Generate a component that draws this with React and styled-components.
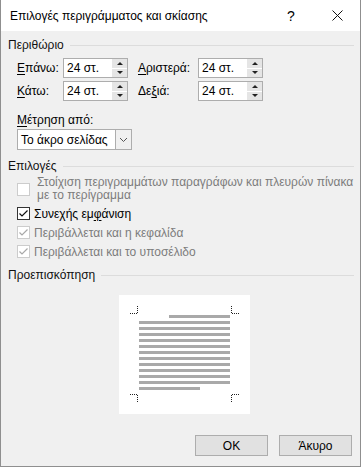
import React from "react";
import styled, { createGlobalStyle } from "styled-components";

const GlobalStyle = createGlobalStyle`
  html, body {
    margin: 0;
    padding: 0;
    background: #f0f0f0;
  }
  body {
    font-family: "Liberation Sans", "DejaVu Sans", sans-serif;
    font-size: 12px;
    color: #000;
  }
`;

const Window = styled.div`
  width: 361px;
  height: 467px;
  box-sizing: border-box;
  border: 1px solid #8f8f8f;
  border-top: none;
  display: flex;
  flex-direction: column;
  background: #f0f0f0;
`;

const TitleBar = styled.div`
  height: 31px;
  flex: none;
  background: #fff;
  display: flex;
  align-items: center;
  padding-left: 9px;
`;

const Title = styled.div`
  flex: 1;
  font-size: 12px;
`;

const TitleButton = styled.div`
  width: 46px;
  height: 31px;
  display: flex;
  align-items: center;
  justify-content: center;
  font-size: 14px;
`;

const Body = styled.div`
  flex: 1;
  display: flex;
  flex-direction: column;
  padding: 6px 6px 0 7px;
`;

const GroupHeader = styled.div`
  display: flex;
  align-items: center;
  gap: 6px;
  height: 16px;
  flex: none;
  margin-top: ${({ $top }) => $top || 0}px;
  color: #111;
  &::after {
    content: "";
    flex: 1;
    height: 1px;
    background: #dcdcdc;
  }
`;

const MarginGrid = styled.div`
  display: grid;
  grid-template-columns: 46px 65px 70px 65px;
  grid-auto-rows: 20px;
  row-gap: 3px;
  align-items: center;
  margin: 5px 0 0 9px;
`;

const Label = styled.span`
  padding-left: ${({ $pad }) => $pad || 0}px;
  white-space: nowrap;
  line-height: 14px;
  u {
    text-decoration: underline;
    text-underline-offset: 2px;
  }
`;

const SpinBox = styled.div`
  box-sizing: border-box;
  height: 20px;
  border: 1px solid #adadad;
  background: #fff;
  display: flex;
  align-items: center;
`;

const SpinValue = styled.span`
  flex: 1;
  padding-left: 3px;
`;

const SpinButtons = styled.div`
  width: 15px;
  height: 18px;
  display: flex;
  flex-direction: column;
  gap: 1px;
  background: #fff;
`;

const SpinHalf = styled.div`
  flex: 1;
  background: #e5e5e5;
  display: flex;
  align-items: center;
  justify-content: center;
  &::before {
    content: "";
    border-left: 3px solid transparent;
    border-right: 3px solid transparent;
    ${({ $down }) =>
      $down ? "border-top: 3px solid #222;" : "border-bottom: 3px solid #222;"}
  }
`;

const MeasureBlock = styled.div`
  display: flex;
  flex-direction: column;
  align-items: flex-start;
  gap: 2px;
  margin: 12px 0 0 9px;
`;

const Select = styled.div`
  box-sizing: border-box;
  width: 115px;
  height: 21px;
  border: 1px solid #adadad;
  background: #fff;
  display: flex;
  align-items: center;
`;

const SelectValue = styled.span`
  flex: 1;
  padding-left: 3px;
  white-space: nowrap;
`;

const SelectArrow = styled.div`
  width: 15px;
  height: 19px;
  border-left: 1px solid #adadad;
  background: #f0f0f0;
  display: flex;
  align-items: center;
  justify-content: center;
`;

const Options = styled.div`
  display: flex;
  flex-direction: column;
  margin: 2px 0 0 9px;
`;

const CheckRow = styled.div`
  display: flex;
  align-items: ${({ $multi }) => ($multi ? "flex-start" : "center")};
  gap: ${({ $gap }) => $gap || 4}px;
  height: ${({ $multi }) => ($multi ? 28 : 19)}px;
  color: ${({ $disabled }) => ($disabled ? "#7c7c7c" : "#000")};
  line-height: ${({ $multi }) => ($multi ? 13 : 14)}px;
  u {
    text-decoration: underline;
    text-underline-offset: 2px;
  }
`;

const Box = styled.div`
  flex: none;
  box-sizing: border-box;
  width: 13px;
  height: 13px;
  margin-top: ${({ $mt }) => $mt || 0}px;
  border: 1px solid ${({ $disabled }) => ($disabled ? "#cccccc" : "#333")};
  background: #fff;
  display: flex;
  align-items: center;
  justify-content: center;
`;

const Preview = styled.div`
  align-self: flex-start;
  width: 131px;
  height: 119px;
  margin: 12px 0 0 111px;
  background: #fff;
  display: flex;
`;

const Footer = styled.div`
  margin-top: auto;
  display: flex;
  justify-content: flex-end;
  gap: 11px;
  padding: 0 2px 10px 0;
`;

const Button = styled.div`
  box-sizing: border-box;
  width: 73px;
  height: 21px;
  border: 1px solid #adadad;
  background: #e1e1e1;
  display: flex;
  align-items: center;
  justify-content: center;
`;

const Check = ({ color }) => (
  <svg width="11" height="11" viewBox="0 0 11 11">
    <path d="M1.5 5.5 L4 8 L9.5 2.5" fill="none" stroke={color} strokeWidth="1.2" />
  </svg>
);

const Chevron = () => (
  <svg width="9" height="6" viewBox="0 0 9 6">
    <path d="M1 1 L4.5 4.5 L8 1" fill="none" stroke="#555" strokeWidth="1" />
  </svg>
);

const Spinner = ({ value }) => (
  <SpinBox>
    <SpinValue>{value}</SpinValue>
    <SpinButtons>
      <SpinHalf />
      <SpinHalf $down />
    </SpinButtons>
  </SpinBox>
);

const PreviewDrawing = () => {
  const lines = [];
  for (let i = 0; i < 11; i++) {
    lines.push(<rect key={i} x="20" y={26 + i * 6} width="91" height="3" fill="#a9a9a9" />);
  }
  const dot = { fill: "none", stroke: "#222", strokeWidth: 1, strokeDasharray: "1 1" };
  return (
    <svg width="131" height="119" viewBox="0 0 131 119">
      <rect x="50" y="20" width="61" height="3" fill="#a9a9a9" />
      {lines}
      <rect x="20" y="92" width="61" height="3" fill="#a9a9a9" />
      <path d="M11 18.5 H18.5 V11" {...dot} />
      <path d="M112.5 11 V18.5 H120" {...dot} />
      <path d="M11 99.5 H18.5 V107" {...dot} />
      <path d="M112.5 107 V99.5 H120" {...dot} />
    </svg>
  );
};

const App = () => (
  <>
    <GlobalStyle />
    <Window>
      <TitleBar>
        <Title>Επιλογές περιγράμματος και σκίασης</Title>
        <TitleButton>?</TitleButton>
        <TitleButton>
          <svg width="11" height="11" viewBox="0 0 11 11">
            <path d="M0.5 0.5 L10.5 10.5 M10.5 0.5 L0.5 10.5" stroke="#111" strokeWidth="1" />
          </svg>
        </TitleButton>
      </TitleBar>
      <Body>
        <GroupHeader>Περιθώριο</GroupHeader>
        <MarginGrid>
          <Label><u>Ε</u>πάνω:</Label>
          <Spinner value="24 στ." />
          <Label $pad={10}><u>Α</u>ριστερά:</Label>
          <Spinner value="24 στ." />
          <Label><u>Κ</u>άτω:</Label>
          <Spinner value="24 στ." />
          <Label $pad={10}>Δε<u>ξ</u>ιά:</Label>
          <Spinner value="24 στ." />
        </MarginGrid>
        <MeasureBlock>
          <Label><u>Μ</u>έτρηση από:</Label>
          <Select>
            <SelectValue>Το άκρο σελίδας</SelectValue>
            <SelectArrow>
              <Chevron />
            </SelectArrow>
          </Select>
        </MeasureBlock>
        <GroupHeader $top={8}>Επιλογές</GroupHeader>
        <Options>
          <CheckRow $disabled $multi $gap={7}>
            <Box $disabled $mt={7} />
            <span>
              Στοίχιση περιγραμμάτων παραγράφων και πλευρών πίνακα
              <br />
              με το περίγραμμα
            </span>
          </CheckRow>
          <CheckRow>
            <Box>
              <Check color="#111" />
            </Box>
            <span>Συνεχής εμ<u>φ</u>άνιση</span>
          </CheckRow>
          <CheckRow $disabled>
            <Box $disabled>
              <Check color="#a8a8a8" />
            </Box>
            <span>Περιβάλλεται και η κεφαλίδα</span>
          </CheckRow>
          <CheckRow $disabled>
            <Box $disabled>
              <Check color="#a8a8a8" />
            </Box>
            <span>Περιβάλλεται και το υποσέλιδο</span>
          </CheckRow>
        </Options>
        <GroupHeader $top={6}>Προεπισκόπηση</GroupHeader>
        <Preview>
          <PreviewDrawing />
        </Preview>
        <Footer>
          <Button>OK</Button>
          <Button>Άκυρο</Button>
        </Footer>
      </Body>
    </Window>
  </>
);

export default App;
